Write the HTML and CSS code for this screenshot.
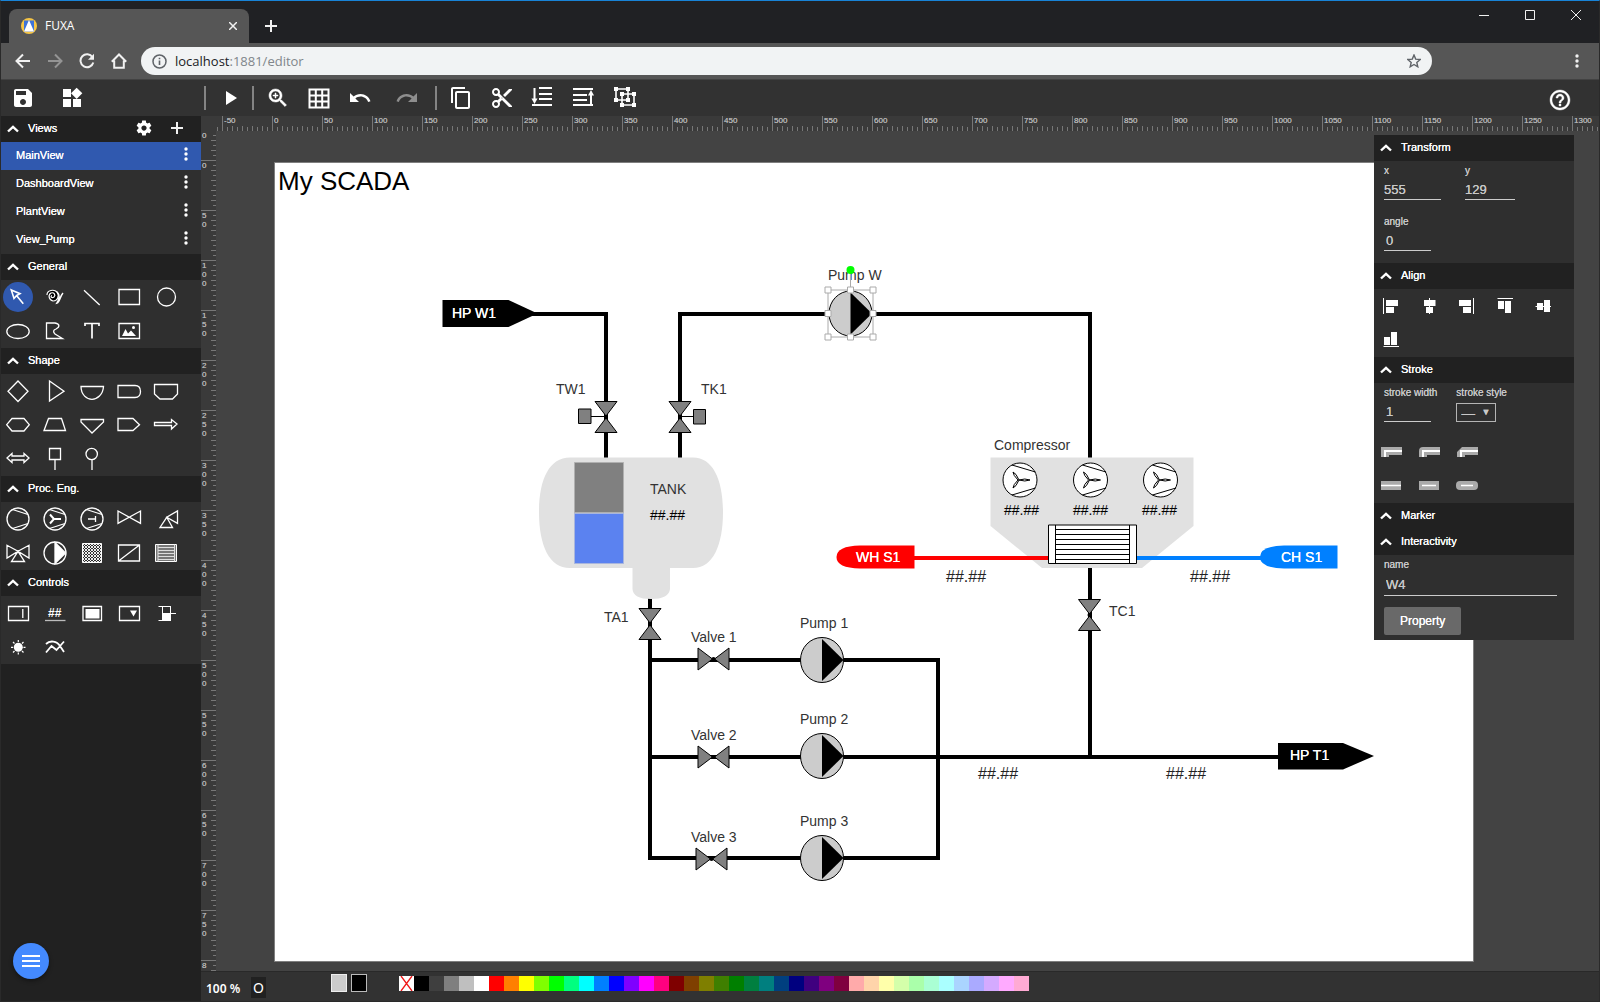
FILE: index.html
```html
<!DOCTYPE html>
<html lang="en">
<head>
<meta charset="utf-8">
<title>FUXA</title>
<link rel="stylesheet" href="styles.css">
</head>
<body>
<svg class="defs" aria-hidden="true">
  <symbol id="chevron" viewBox="0 0 12 8"><path d="M1 6.500L6 1.800L11 6.500" fill="none" stroke="#fff" stroke-width="2.400"/></symbol>
  <symbol id="dots" viewBox="0 0 4 14"><circle cx="2" cy="2" r="1.700"/><circle cx="2" cy="7" r="1.700"/><circle cx="2" cy="12" r="1.700"/></symbol>
</svg>
<div class="window">
  <header class="titlebar">
    <div class="tab">
      <svg width="16" height="16" viewBox="0 0 16 16"><circle cx="8" cy="8" r="8" fill="#f6c545"/><path d="M3 2.500H13V13.500H3Z" fill="#3f74d8"/><path d="M8 2L13 13.500H3Z" fill="#fff"/></svg>
      <span class="tab-title">FUXA</span>
      <button class="plain" aria-label="Close tab"><svg width="8" height="8" viewBox="0 0 8 8"><path d="M0 0L8 8M8 0L0 8" fill="none" stroke="#f1f1f1" stroke-width="1.500"/></svg></button>
    </div>
    <button class="plain new-tab" aria-label="New tab"><svg width="12" height="12" viewBox="0 0 12 12"><path d="M6 0V12M0 6H12" class="line-2"/></svg></button>
    <div class="window-buttons">
      <button class="plain" aria-label="Minimize"><svg width="10" height="10" viewBox="0 0 10 10"><path d="M0 5.500H10" class="line-1"/></svg></button>
      <button class="plain" aria-label="Maximize"><svg width="10" height="10" viewBox="0 0 10 10"><path d="M.5 .5H9.500V9.500H.5Z" class="line-1"/></svg></button>
      <button class="plain" aria-label="Close"><svg width="10" height="10" viewBox="0 0 10 10"><path d="M0 0L10 10M10 0L0 10" class="line-1"/></svg></button>
    </div>
  </header>

  <nav class="navbar">
    <div class="nav-buttons">
      <button class="plain" aria-label="Back"><svg width="16" height="16" viewBox="0 0 16 16"><path d="M15 8H2M8 1.500L1.500 8L8 14.500" class="line-2"/></svg></button>
      <button class="plain dim" aria-label="Forward"><svg width="16" height="16" viewBox="0 0 16 16"><path d="M1 8H14M8 1.500L14.500 8L8 14.500" class="line-2"/></svg></button>
      <button class="plain" aria-label="Reload"><svg width="16" height="16" viewBox="0 0 16 16"><path d="M13.500 4.200A6.500 6.500 0 1 0 14.300 9.500" class="line-2"/><path d="M15 .8V6.800H9Z" fill="#f1f1f1"/></svg></button>
      <button class="plain" aria-label="Home"><svg width="16" height="16" viewBox="0 0 16 16"><path d="M.8 8.700L8 1.500L15.200 8.700M3.200 7.500V14.800H12.800V7.500" class="line-2"/></svg></button>
    </div>
    <div class="omnibox">
      <svg width="15" height="15" viewBox="0 0 15 15"><circle cx="7.500" cy="7.500" r="6.500" fill="none" stroke="#5f6368" stroke-width="1.500"/><path d="M6.700 6.500H8.300V11H6.700ZM6.700 3.800H8.300V5.300H6.700Z" fill="#5f6368"/></svg>
      <span class="url">localhost<span class="url-path">:1881/editor</span></span>
      <button class="plain" aria-label="Bookmark"><svg width="14" height="14" viewBox="0 0 14 14"><path d="M7 1L8.700 5.100L13.200 5.500L9.800 8.400L10.800 12.800L7 10.500L3.200 12.800L4.200 8.400L.8 5.500L5.300 5.100Z" fill="none" stroke="#5f6368" stroke-width="1.400"/></svg></button>
    </div>
    <button class="plain browser-menu" aria-label="Menu"><svg width="4" height="14" fill="#f1f1f1"><use href="#dots"/></svg></button>
  </nav>

  <div class="toolbar">
    <div class="tool-group file-group">
      <button class="plain" aria-label="Save"><svg class="icon" viewBox="0 0 24 24"><path d="M17 3H5c-1.110 0-2 .9-2 2v14c0 1.100.89 2 2 2h14c1.100 0 2-.9 2-2V7l-4-4zm-5 16c-1.660 0-3-1.340-3-3s1.340-3 3-3 3 1.340 3 3-1.340 3-3 3zm3-10H5V5h10v4z"/></svg></button>
      <button class="plain" aria-label="Widgets"><svg class="icon" viewBox="0 0 24 24"><path d="M13 13v8h8v-8h-8zM3 21h8v-8H3v8zM3 3v8h8V3H3zm13.660-1.310L11 7.340 16.660 13l5.660-5.660-5.660-5.650z"/></svg></button>
    </div>
    <div class="tool-group">
      <button class="plain" aria-label="Run"><svg class="icon" viewBox="0 0 24 24"><path d="M8 5v14l11-7z"/></svg></button>
    </div>
    <div class="tool-group edit-group">
      <button class="plain" aria-label="Zoom"><svg class="icon" viewBox="0 0 24 24"><path d="M15.500 14h-.79l-.28-.27C15.410 12.590 16 11.110 16 9.500 16 5.910 13.090 3 9.500 3S3 5.910 3 9.500 5.910 16 9.500 16c1.610 0 3.090-.59 4.230-1.570l.27.28v.79l5 4.990L20.490 19l-4.990-5zm-6 0C7.010 14 5 11.990 5 9.500S7.010 5 9.500 5 14 7.010 14 9.500 11.990 14 9.500 14zM12 10h-2v2H9v-2H7V9h2V7h1v2h2v1z" stroke="#fff" stroke-width=".5"/></svg></button>
      <button class="plain" aria-label="Grid"><svg class="icon" viewBox="0 0 24 24"><path d="M2.500 3.500H21.500V21.500H2.500ZM8.800 3V22M15.200 3V22M2 9.500H22M2 15.500H22" fill="none" stroke="#fff" stroke-width="2"/></svg></button>
      <button class="plain" aria-label="Undo"><svg class="icon" viewBox="0 0 24 24"><path d="M12.500 8c-2.650 0-5.050.99-6.900 2.600L2 7v9h9l-3.620-3.620c1.390-1.160 3.160-1.880 5.120-1.880 3.540 0 6.550 2.310 7.600 5.500l2.370-.78C21.080 11.030 17.150 8 12.500 8z"/></svg></button>
      <button class="plain redo" aria-label="Redo" disabled><svg class="icon" viewBox="0 0 24 24"><path d="M18.400 10.600C16.550 8.990 14.150 8 11.500 8c-4.650 0-8.580 3.030-9.960 7.220L3.900 16c1.050-3.190 4.050-5.500 7.600-5.500 1.950 0 3.730.72 5.120 1.880L13 16h9V7l-3.600 3.600z"/></svg></button>
    </div>
    <div class="tool-group">
      <button class="plain" aria-label="Copy"><svg class="icon" viewBox="0 0 24 24"><path d="M16 1H4c-1.100 0-2 .9-2 2v14h2V3h12V1zm3 4H8c-1.100 0-2 .9-2 2v14c0 1.100.9 2 2 2h11c1.100 0 2-.9 2-2V7c0-1.100-.9-2-2-2zm0 16H8V7h11v14z"/></svg></button>
      <button class="plain" aria-label="Cut"><svg class="icon" viewBox="0 0 24 24"><path d="M9.640 7.640c.23-.5.36-1.050.36-1.640 0-2.210-1.790-4-4-4S2 3.790 2 6s1.790 4 4 4c.59 0 1.140-.13 1.640-.36L10 12l-2.360 2.360C7.140 14.130 6.590 14 6 14c-2.210 0-4 1.790-4 4s1.790 4 4 4 4-1.790 4-4c0-.59-.13-1.140-.36-1.640L12 14l7 7h3v-1L9.640 7.640zM6 8c-1.100 0-2-.89-2-2s.9-2 2-2 2 .89 2 2-.9 2-2 2zm0 12c-1.100 0-2-.89-2-2s.9-2 2-2 2 .89 2 2-.9 2-2 2zm6-7.500c-.28 0-.5-.22-.5-.5s.22-.5.5-.5.5.22.5.5-.22.5-.5.5zM19 3l-6 6 2 2 7-7V3z"/></svg></button>
      <button class="plain" aria-label="Send to back"><svg class="icon" viewBox="0 0 24 24"><path d="M8 2H21M8 8H21M8 13H21M1 19H21M3.500 2V15" fill="none" stroke="#fff" stroke-width="2"/><path d="M.5 12.500H6.500L3.500 18Z"/></svg></button>
      <button class="plain" aria-label="Bring to front"><svg class="icon" viewBox="0 0 24 24"><path d="M1 3H21M1 9H15M1 14H15M1 19H21M19 7V19" fill="none" stroke="#fff" stroke-width="2"/><path d="M16 9.500H22L19 4Z"/></svg></button>
      <button class="plain" aria-label="Group"><svg class="icon" viewBox="0 0 24 24"><path d="M3 3H15V14H3ZM9 8H21V19H9Z" fill="none" stroke="#fff" stroke-width="1.600"/><path d="M1 1h4v4H1zM13 1h4v4h-4zM1 12h4v4H1zM13 12h4v4h-4zM7 6h4v4H7zM19 6h4v4h-4zM7 17h4v4H7zM19 17h4v4h-4z"/></svg></button>
    </div>
    <button class="plain help" aria-label="Help"><svg class="icon" viewBox="0 0 24 24"><path d="M11 18h2v-2h-2v2zm1-16C6.480 2 2 6.480 2 12s4.480 10 10 10 10-4.480 10-10S17.520 2 12 2zm0 18c-4.410 0-8-3.590-8-8s3.590-8 8-8 8 3.590 8 8-3.590 8-8 8zm0-14c-2.210 0-4 1.790-4 4h2c0-1.100.9-2 2-2s2 .9 2 2c0 2-3 1.750-3 5h2c0-2.250 3-2.500 3-5 0-2.210-1.790-4-4-4z" stroke="#fff" stroke-width=".4"/></svg></button>
  </div>

  <div class="main">
    <aside class="sidebar">
      <div class="section-head">
        <button class="fold"><svg class="chevron"><use href="#chevron"/></svg>Views</button>
        <button class="plain" aria-label="View settings"><svg width="18" height="18" viewBox="0 0 24 24" fill="#fff"><path d="M19.430 12.980c.04-.32.07-.64.07-.98s-.03-.66-.07-.98l2.110-1.650c.19-.15.24-.42.12-.64l-2-3.460c-.12-.22-.39-.3-.61-.22l-2.490 1c-.52-.4-1.080-.73-1.690-.98l-.38-2.650C14.460 2.180 14.250 2 14 2h-4c-.25 0-.46.18-.49.42l-.38 2.650c-.61.25-1.170.59-1.690.98l-2.490-1c-.23-.09-.49 0-.61.22l-2 3.460c-.13.22-.07.49.12.64l2.110 1.650c-.04.32-.07.65-.07.98s.03.66.07.98l-2.110 1.650c-.19.15-.24.42-.12.64l2 3.460c.12.22.39.3.61.22l2.490-1c.52.4 1.080.73 1.690.98l.38 2.650c.03.24.24.42.49.42h4c.25 0 .46-.18.49-.42l.38-2.650c.61-.25 1.170-.59 1.690-.98l2.490 1c.23.09.49 0 .61-.22l2-3.460c.12-.22.07-.49-.12-.64l-2.110-1.650zM12 15.500c-1.930 0-3.500-1.570-3.500-3.500s1.570-3.500 3.500-3.500 3.500 1.570 3.500 3.500-1.570 3.500-3.500 3.500z"/></svg></button>
        <button class="plain add-view" aria-label="Add view"><svg width="12" height="12" viewBox="0 0 12 12"><path d="M6 0V12M0 6H12" class="line-2"/></svg></button>
      </div>
      <ul class="views">
        <li class="view active"><span>MainView</span><button class="plain" aria-label="MainView menu"><svg width="4" height="14" fill="#fff"><use href="#dots"/></svg></button></li>
        <li class="view"><span>DashboardView</span><button class="plain" aria-label="DashboardView menu"><svg width="4" height="14" fill="#fff"><use href="#dots"/></svg></button></li>
        <li class="view"><span>PlantView</span><button class="plain" aria-label="PlantView menu"><svg width="4" height="14" fill="#fff"><use href="#dots"/></svg></button></li>
        <li class="view"><span>View_Pump</span><button class="plain" aria-label="View_Pump menu"><svg width="4" height="14" fill="#fff"><use href="#dots"/></svg></button></li>
      </ul>

      <div class="section-head"><button class="fold"><svg class="chevron"><use href="#chevron"/></svg>General</button></div>
      <div class="tools">
        <button class="tool" aria-label="Select"><svg viewBox="-17 -17 37 34"><circle r="15" fill="#3059af" stroke="none"/><path d="M-6.700 -7L2 -3.300L-1.300 -1.500L-4 1.500ZM-1.500 -1.500L5.300 6.800" stroke-width="1.600"/></svg></button>
        <button class="tool" aria-label="Pencil"><svg viewBox="-17 -17 37 34"><path d="M-3 -1.500C-5 -.5 -3.500 1.500 -1 0C1 -2 -1 -5 -4 -4C-7 -2.500 -6.500 3 -2 4C3 4 4.500 -2 2 -5C-1 -8 -8 -7 -8 -2" fill="#000" stroke-width="1.200"/><path d="M2 -5C5 -2 5 1 2 6C5 5 5 -1 8 -4" stroke-width="1.500"/></svg></button>
        <button class="tool" aria-label="Line"><svg viewBox="-17 -17 37 34"><path d="M-8 -6.700L7.700 8"/></svg></button>
        <button class="tool" aria-label="Rectangle"><svg viewBox="-17 -17 37 34"><path d="M-10 -7.500H10.500V7.500H-10Z"/></svg></button>
        <button class="tool" aria-label="Circle"><svg viewBox="-17 -17 37 34"><circle cx=".5" r="9"/></svg></button>
        <button class="tool" aria-label="Ellipse"><svg viewBox="-17 -17 37 34"><ellipse cy=".5" rx="11.200" ry="7"/></svg></button>
        <button class="tool" aria-label="Path"><svg viewBox="-17 -17 37 34"><path d="M-8.500 -8H0C5 -7 5 -4 1 -2C-2 -1 -2 1 0 3L7.500 7.500H-8.500Z"/></svg></button>
        <button class="tool" aria-label="Text"><svg viewBox="-17 -17 37 34"><path d="M-7 -5V-7.500H7V-5M0 -7.500V7.500" stroke-width="1.700"/></svg></button>
        <button class="tool" aria-label="Image"><svg viewBox="-17 -17 37 34"><path d="M-10 -7.500H10.500V7.500H-10Z"/><path d="M-7 5L-3.500 -2L-1 2.500L2 -.5L7 5Z" fill="#fff" stroke="none"/><circle cx="4.500" cy="-3.500" r="1.500" fill="#fff" stroke="none"/></svg></button>
      </div>

      <div class="section-head"><button class="fold"><svg class="chevron"><use href="#chevron"/></svg>Shape</button></div>
      <div class="tools">
        <button class="tool" aria-label="Diamond"><svg viewBox="-17 -17 37 34"><path d="M0 -10L10 .3L0 10.500L-10 .3Z"/></svg></button>
        <button class="tool" aria-label="Triangle"><svg viewBox="-17 -17 37 34"><path d="M-5.500 -10L9 .3L-5.500 10Z"/></svg></button>
        <button class="tool" aria-label="Bowl"><svg viewBox="-17 -17 37 34"><path d="M-11 -4.500H11.500C11 4 5 8.300 0 8.300S-11 4 -11 -4.500Z"/></svg></button>
        <button class="tool" aria-label="Delay"><svg viewBox="-17 -17 37 34"><path d="M-11 -5.500H6C9.500 -5.500 11.500 -3 11.500 .5S9.500 6.500 6 6.500H-11Z"/></svg></button>
        <button class="tool" aria-label="Tray"><svg viewBox="-17 -17 37 34"><path d="M-11.500 -6.500H11.500V3L6.500 8H-6L-11.500 3Z"/></svg></button>
        <button class="tool" aria-label="Hexagon"><svg viewBox="-17 -17 37 34"><path d="M-11.300 -.3L-6 -6.500H6L11.300 -.3L6 6H-6Z"/></svg></button>
        <button class="tool" aria-label="Trapezoid"><svg viewBox="-17 -17 37 34"><path d="M-11 5.500L-6.500 -6.500H6.500L10.500 5.500Z"/></svg></button>
        <button class="tool" aria-label="Funnel"><svg viewBox="-17 -17 37 34"><path d="M-11 -5.500H11.500V-3L0 8L-11 -3Z"/></svg></button>
        <button class="tool" aria-label="Pentagon"><svg viewBox="-17 -17 37 34"><path d="M-11 -6.500H4L10.500 -.3L4 5.500H-11Z"/></svg></button>
        <button class="tool" aria-label="Arrow"><svg viewBox="-17 -17 37 34"><path d="M-11.500 -2.500H5.500V-5.500L11 -1L5.500 4V.5H-11.500Z"/></svg></button>
        <button class="tool" aria-label="Double arrow"><svg viewBox="-17 -17 37 34"><path d="M-11 -1L-6 -5.500V-3H6V-5.500L11 -1L6 3.500V1H-6V3.500Z"/></svg></button>
        <button class="tool" aria-label="Square tag"><svg viewBox="-17 -17 37 34"><path d="M-5.500 -10.500H5.500V.5H-5.500ZM0 .5V11"/></svg></button>
        <button class="tool" aria-label="Round tag"><svg viewBox="-17 -17 37 34"><circle cx="-.3" cy="-5" r="5.700"/><path d="M0 .5V11"/></svg></button>
      </div>

      <div class="section-head"><button class="fold"><svg class="chevron"><use href="#chevron"/></svg>Proc. Eng.</button></div>
      <div class="tools">
        <button class="tool" aria-label="Compressor"><svg viewBox="-17 -17 37 34"><circle r="11"/><path d="M-5.500 -9.500L10 -4.500M-5.500 9.500L10 4.500"/></svg></button>
        <button class="tool" aria-label="Fan"><svg viewBox="-17 -17 37 34"><circle r="11"/><path d="M-5.500 -9.500L10 -4.500M-5.500 9.500L10 4.500"/><path d="M-5 -4.500L-1 0L-5 4.500M-1 0H6" stroke-width="2"/></svg></button>
        <button class="tool" aria-label="Piston"><svg viewBox="-17 -17 37 34"><circle r="11"/><path d="M-5.500 -9.500L10 -4.500M-5.500 9.500L10 4.500M3.500 -3V3M-4 0H3.500"/></svg></button>
        <button class="tool" aria-label="Valve"><svg viewBox="-17 -17 37 34"><path d="M-11 -8L11.500 4.300V-8L-11 4.300Z"/></svg></button>
        <button class="tool" aria-label="Angle valve"><svg viewBox="-17 -17 37 34"><path d="M11.500 -8V4.300L.7 -1.700ZM.7 -1.700L-6 8.500H6.500Z"/></svg></button>
        <button class="tool" aria-label="Three way valve"><svg viewBox="-17 -17 37 34"><path d="M-11 -7.700V5L0 -1.700ZM11 -7.700V5L0 -1.700ZM0 -1.700L-6.500 8.500H6.500Z"/></svg></button>
        <button class="tool" aria-label="Pump"><svg viewBox="-17 -17 37 34"><circle r="11"/><path d="M0 -10.500V10.500L10.500 0Z" fill="#fff"/></svg></button>
        <button class="tool" aria-label="Filter"><svg viewBox="-17 -17 37 34"><pattern id="hatch" width="3" height="3" patternUnits="userSpaceOnUse"><path d="M0 0L3 3M3 0L0 3" stroke="#fff" stroke-width=".9"/></pattern><path d="M-9.500 -9.500H9.500V9.500H-9.500Z" fill="url(#hatch)" stroke-width="1"/></svg></button>
        <button class="tool" aria-label="Heat exchanger"><svg viewBox="-17 -17 37 34"><path d="M-10.500 -8H10.500V8H-10.500ZM-10.500 8L10.500 -8"/></svg></button>
        <button class="tool" aria-label="Tube bundle"><svg viewBox="-17 -17 37 34"><path d="M-10.500 -8.500H10.500V8.500H-10.500Z" fill="#777" stroke-width="1"/><path d="M-8 -8.500V8.500M8.500 -8.500V8.500M-8 -5.500H8M-8 -2.500H8M-8 .5H8M-8 3.500H8M-8 6.500H8" stroke-width="1" stroke="#ddd"/></svg></button>
      </div>

      <div class="section-head"><button class="fold"><svg class="chevron"><use href="#chevron"/></svg>Controls</button></div>
      <div class="tools">
        <button class="tool" aria-label="Input"><svg viewBox="-17 -17 37 34"><path d="M-9.500 -6.500H10.500V7.500H-9.500ZM4.800 -4V5"/></svg></button>
        <button class="tool" aria-label="Output"><svg viewBox="-17 -17 37 34"><text x="-7" y="4">##</text><path d="M-10 7.500H10.500" stroke="#bbb"/></svg></button>
        <button class="tool" aria-label="Button"><svg viewBox="-17 -17 37 34"><path d="M-9 -6.500H9.500V7.500H-9Z"/><path d="M-6.500 -4H7.500V5.500H-6.500Z" fill="#fff" stroke="none"/></svg></button>
        <button class="tool" aria-label="Drop-down"><svg viewBox="-17 -17 37 34"><path d="M-9.500 -6.500H10.500V7.500H-9.500Z"/><path d="M1 -2.500H8L4.500 3.500Z" fill="#fff" stroke="none"/></svg></button>
        <button class="tool" aria-label="Slider"><svg viewBox="-17 -17 37 34"><path d="M-7.500 -6.500H5M-7.500 7.500H-3M-3.500 -6.500V7.500M4.500 -6.500V0M4.500 .5H10" stroke-width="1"/><path d="M-4 0H5V8H-4Z" fill="#fff" stroke="none"/></svg></button>
        <button class="tool" aria-label="Lamp"><svg viewBox="-17 -17 37 34"><circle cx=".3" cy=".3" r="4.500" fill="#fff" stroke="none"/><path d="M.3 -7V-5M.3 5.500V7.500M-7 .3H-5M5.500 .3H7.500M-5 -5L-3.500 -3.500M4 4L5.500 5.500M-5 5.500L-3.500 4M4 -3.500L5.500 -5" stroke-width="1.200"/></svg></button>
        <button class="tool" aria-label="Chart"><svg viewBox="-17 -17 37 34"><path d="M-9 5.500L-3.500 -1L1.500 3L9 -5.500M-9 -3C-5 -7 2 -6 5 -1L9 5" stroke-width="1.800"/></svg></button>
      </div>
      <button class="fab" aria-label="Menu"><svg width="18" height="14" viewBox="0 0 18 14"><path d="M0 2H18M0 7H18M0 12H18" stroke="#fff" stroke-width="2"/></svg></button>
    </aside>

    <div class="editor">
      <div class="ruler-top">
        <span>-50</span><span>0</span><span>50</span><span>100</span><span>150</span><span>200</span><span>250</span><span>300</span><span>350</span><span>400</span><span>450</span><span>500</span><span>550</span><span>600</span><span>650</span><span>700</span><span>750</span><span>800</span><span>850</span><span>900</span><span>950</span><span>1000</span><span>1050</span><span>1100</span><span>1150</span><span>1200</span><span>1250</span><span>1300</span>
      </div>
      <div class="stage">
        <div class="ruler-left">
          <div class="marks"><span class="partial">0</span><span>0</span><span>50</span><span>100</span><span>150</span><span>200</span><span>250</span><span>300</span><span>350</span><span>400</span><span>450</span><span>500</span><span>550</span><span>600</span><span>650</span><span>700</span><span>750</span><span class="last">8</span></div>
        </div>
        <div class="workspace">
          <svg class="drawing" width="1200" height="800" viewBox="274 162 1200 800">
            <defs>
              <g id="valve"><path d="M-11 -15.500H11L0 -1ZM-11 15.500H11L0 1Z" fill="#808080" stroke="#000"/><circle r="2"/></g>
              <g id="pump"><ellipse rx="21.500" ry="22.500" fill="#ccc" stroke="#000"/><path d="M0 -21V21L21.500 0Z"/></g>
              <g id="fan" fill="none" stroke="#000"><circle r="17" fill="#fff"/><path d="M-8 -15L15.500 -8M-8 15L15.500 8"/><path d="M-7 -8Q-4 -7 -1 0Q-4 7 -7 8Q-7 5 -2 0Q-7 -5 -7 -8ZM-1 0Q5 -2 10 0Q5 2 -1 0Z"/></g>
              <g id="handle"><path d="M-3 -3H3V3H-3Z" fill="#fff" stroke="#aaa"/></g>
            </defs>
            <path d="M274.500 162.500H1473.500V961.500H274.500Z" fill="#fff" stroke="#7f7f7f"/>
            <text class="heading" x="278" y="190">My SCADA</text>

            <g fill="none" stroke="#000" stroke-width="4">
              <path d="M530 314H606V458M680 458V314H1090V458M1090 566V757M650 598V858H938V660H650M650 757H1280"/>
              <path d="M912 558H1049" stroke="#f00"/>
              <path d="M1135 558H1264" stroke="#0080ff"/>
            </g>

            <path d="M442.500 300H508.500L537.500 313.500L508.500 327H442.500Z"/>
            <path d="M1278 743H1343L1374 756L1343 769.500H1278Z"/>

            <path d="M570 457.500H693C713 457.500 723 480 723 512C723 545 713 568 693 568H670V589Q669 599 651 599Q633 599 632.500 589V568H570C549 568 539 545 539 512C539 480 549 457.500 570 457.500Z" fill="#e1e1e1"/>
            <path d="M574.500 462.500H623.500V512.500H574.500Z" fill="#808080" stroke="#b0b0b0"/>
            <path d="M574.500 513.500H623.500V563.500H574.500Z" fill="#5b82f0" stroke="#a9b6dd"/>

            <g fill="#808080" stroke="#000"><path d="M578.500 409H591V423.500H578.500ZM591 416.500H606M693.500 409.500H705.500V424H693.500ZM693 416.500H680"/></g>
            <use href="#valve" x="606" y="417"/>
            <use href="#valve" x="680" y="417"/>
            <use href="#valve" x="650" y="624"/>
            <use href="#valve" x="1089.500" y="615"/>
            <use href="#valve" transform="translate(713.500 659) rotate(90)"/>
            <use href="#valve" transform="translate(713.500 757) rotate(90)"/>
            <use href="#valve" transform="translate(711.500 859) rotate(90)"/>
            <use href="#pump" x="822" y="660"/>
            <use href="#pump" x="822" y="756"/>
            <use href="#pump" x="822" y="858"/>
            <use href="#pump" x="850.500" y="313.500"/>

            <path d="M990.500 457.500H1193.500V526L1142 568H1042L990.500 526Z" fill="#e1e1e1"/>
            <path d="M1020 558H1048" stroke="#f00" stroke-width="4"/>
            <path d="M1136 558H1160" stroke="#0080ff" stroke-width="4"/>
            <use href="#fan" x="1020" y="480"/>
            <use href="#fan" x="1090.500" y="480"/>
            <use href="#fan" x="1160.500" y="480"/>
            <path d="M1048.500 525H1136.500V563.500H1048.500ZM1055.500 525V563.500M1129.500 525V563.500M1055 529.500H1129M1055 534.500H1129M1055 539.500H1129M1055 544.500H1129M1055 549.500H1129M1055 554.500H1129M1055 559.500H1129" fill="#fff" stroke="#000"/>
            <path d="M914.500 545.500V568.500H860Q836.500 568 836.500 557Q836.500 546 860 545.500Z" fill="#f00"/>
            <path d="M1337.500 545.500V568.500H1284Q1260 568 1260 557Q1260 546 1284 545.500Z" fill="#0080ff"/>

            <g class="label">
              <text x="556" y="394">TW1</text>
              <text x="701" y="394">TK1</text>
              <text x="828" y="280">Pump W</text>
              <text x="650" y="494">TANK</text>
              <text x="994" y="450">Compressor</text>
              <text x="604" y="622">TA1</text>
              <text x="1109" y="616">TC1</text>
              <text x="691" y="642">Valve 1</text>
              <text x="691" y="740">Valve 2</text>
              <text x="691" y="842">Valve 3</text>
              <text x="800" y="628">Pump 1</text>
              <text x="800" y="724">Pump 2</text>
              <text x="800" y="826">Pump 3</text>
            </g>
            <g class="label value">
              <text x="650" y="520">##.##</text>
              <text x="1004" y="515">##.##</text>
              <text x="1073" y="515">##.##</text>
              <text x="1142" y="515">##.##</text>
            </g>
            <g class="reading">
              <text x="946" y="582">##.##</text>
              <text x="1190" y="582">##.##</text>
              <text x="978" y="779">##.##</text>
              <text x="1166" y="779">##.##</text>
            </g>
            <g class="label tag">
              <text x="452" y="318">HP W1</text>
              <text x="1290" y="760">HP T1</text>
              <text x="856" y="562">WH S1</text>
              <text x="1281" y="562">CH S1</text>
            </g>

            <path d="M828 290H873V337H828ZM850.500 290V270" fill="none" stroke="#aaa"/>
            <use href="#handle" x="828" y="290"/><use href="#handle" x="850.500" y="290"/><use href="#handle" x="873" y="290"/>
            <use href="#handle" x="828" y="313.500"/><use href="#handle" x="873" y="313.500"/>
            <use href="#handle" x="828" y="337"/><use href="#handle" x="850.500" y="337"/><use href="#handle" x="873" y="337"/>
            <circle cx="850.500" cy="270" r="4" fill="#0f0"/>
          </svg>

          <section class="panel">
            <div class="section-head"><button class="fold"><svg class="chevron"><use href="#chevron"/></svg>Transform</button></div>
            <div class="panel-body transform-body">
              <div class="fields">
                <label class="field">x<input class="w-x" value="555"></label>
                <label class="field">y<input class="w-y" value="129"></label>
              </div>
              <label class="field">angle<input class="w-s" value="0"></label>
            </div>
            <div class="section-head"><button class="fold"><svg class="chevron"><use href="#chevron"/></svg>Align</button></div>
            <div class="icon-grid">
              <button class="cell" aria-label="Align left"><svg viewBox="-17 -17 38 34"><path d="M-7.500 -8V8" stroke="#fff"/><path d="M-5 -6H7V0H-5ZM-5 1H3V7H-5Z"/></svg></button>
              <button class="cell" aria-label="Align center"><svg viewBox="-17 -17 38 34"><path d="M.5 -8V8" stroke="#fff"/><path d="M-5 -6H6.500V0H-5ZM-3 1H4V7H-3Z"/></svg></button>
              <button class="cell" aria-label="Align right"><svg viewBox="-17 -17 38 34"><path d="M6.500 -8V8" stroke="#fff"/><path d="M-8 -6H4V0H-8ZM-4 1H4V7H-4Z"/></svg></button>
              <button class="cell" aria-label="Align top"><svg viewBox="-17 -17 38 34"><path d="M-7.500 -7.500H8" stroke="#fff"/><path d="M-7 -5H-1V3H-7ZM0 -5H6V7H0Z"/></svg></button>
              <button class="cell" aria-label="Align middle"><svg viewBox="-17 -17 38 34"><path d="M-7.500 .5H8" stroke="#fff"/><path d="M-6 -3H0V4H-6ZM1 -6H7V6H1Z"/></svg></button>
              <button class="cell" aria-label="Align bottom"><svg viewBox="-17 -17 38 34"><path d="M-7.500 6.500H8" stroke="#fff"/><path d="M-7 -3H-1V5H-7ZM0 -8H6V5H0Z"/></svg></button>
            </div>
            <div class="section-head"><button class="fold"><svg class="chevron"><use href="#chevron"/></svg>Stroke</button></div>
            <div class="panel-body stroke-body">
              <label class="field">stroke width<input class="w-s" value="1"></label>
              <label class="field">stroke style<span class="picker"><select><option>—</option><option>...</option><option>- -</option></select></span></label>
            </div>
            <div class="icon-grid stroke-icons">
              <button class="cell" aria-label="Miter join"><svg viewBox="-17 -17 38 34"><path d="M-10 5V-5H11V3H-2V5Z" fill="#aaa"/><path d="M-6 5V-1H11" fill="none" stroke="#fff" stroke-width="2"/></svg></button>
              <button class="cell" aria-label="Round join"><svg viewBox="-17 -17 38 34"><path d="M-10 5V-1Q-10 -5 -6 -5H11V3H-2V5Z" fill="#aaa"/><path d="M-6 5V-1H11" fill="none" stroke="#fff" stroke-width="2"/></svg></button>
              <button class="cell" aria-label="Bevel join"><svg viewBox="-17 -17 38 34"><path d="M-10 5V0L-5 -5H11V3H-2V5Z" fill="#aaa"/><path d="M-6 5V-1H11" fill="none" stroke="#fff" stroke-width="2"/></svg></button>
            </div>
            <div class="icon-grid stroke-icons">
              <button class="cell" aria-label="Butt cap"><svg viewBox="-17 -17 38 34"><path d="M-10 -5H10V4H-10Z" fill="#aaa"/><path d="M-10 -.5H10" stroke="#fff" stroke-width="1.500"/></svg></button>
              <button class="cell" aria-label="Square cap"><svg viewBox="-17 -17 38 34"><path d="M-10 -5H10V4H-10Z" fill="#aaa"/><path d="M-7 -.5H7" stroke="#fff" stroke-width="1.500"/></svg></button>
              <button class="cell" aria-label="Round cap"><svg viewBox="-17 -17 38 34"><rect x="-11" y="-5" width="22" height="9" rx="4" fill="#aaa"/><path d="M-6 -.5H6" stroke="#fff" stroke-width="1.500"/></svg></button>
            </div>
            <div class="section-head"><button class="fold"><svg class="chevron"><use href="#chevron"/></svg>Marker</button></div>
            <div class="section-head"><button class="fold"><svg class="chevron"><use href="#chevron"/></svg>Interactivity</button></div>
            <div class="panel-body interact-body">
              <label class="field wide">name<input class="w-full" value="W4"></label>
              <button class="property">Property</button>
            </div>
          </section>
        </div>
      </div>

      <footer class="bottombar">
        <span class="zoom">100 %</span>
        <button class="opacity">O</button>
        <button class="paint fill" aria-label="Fill colour"></button>
        <button class="paint stroke" aria-label="Stroke colour"></button>
        <div class="palette">
          <button aria-label="No colour" style="background:#fff"><svg width="15" height="15" viewBox="0 0 15 15"><path d="M2 0L13 15M13 0L2 15" stroke="#f01818" stroke-width="1.300"/></svg></button>
          <button style="background:#000"></button><button style="background:#3f3f3f"></button><button style="background:#7f7f7f"></button><button style="background:#bfbfbf"></button><button style="background:#fff"></button>
          <button style="background:#f00"></button><button style="background:#ff7f00"></button><button style="background:#ff0"></button><button style="background:#7fff00"></button><button style="background:#0f0"></button><button style="background:#00ff7f"></button><button style="background:#0ff"></button><button style="background:#007fff"></button><button style="background:#00f"></button><button style="background:#7f00ff"></button><button style="background:#f0f"></button><button style="background:#ff007f"></button>
          <button style="background:#7f0000"></button><button style="background:#7f3f00"></button><button style="background:#7f7f00"></button><button style="background:#3f7f00"></button><button style="background:#007f00"></button><button style="background:#007f3f"></button><button style="background:#007f7f"></button><button style="background:#003f7f"></button><button style="background:#00007f"></button><button style="background:#3f007f"></button><button style="background:#7f007f"></button><button style="background:#7f003f"></button>
          <button style="background:#faa"></button><button style="background:#ffd4aa"></button><button style="background:#ffa"></button><button style="background:#d4ffaa"></button><button style="background:#afa"></button><button style="background:#aaffd4"></button><button style="background:#aff"></button><button style="background:#aad4ff"></button><button style="background:#aaf"></button><button style="background:#d4aaff"></button><button style="background:#faf"></button><button style="background:#ffaad4"></button>
        </div>
      </footer>
    </div>
  </div>
</div>
</body>
</html>
```
FILE: styles.css
```css
* { box-sizing: border-box; }

body {
  margin: 0;
  font-family: "Liberation Sans", Arial, sans-serif;
  font-size: 11px;
  color: #fff;
  background: #212121;
}

button, input, select { font: inherit; color: inherit; }
svg { display: block; }

.defs { position: absolute; width: 0; height: 0; }

.plain, .fold, .tool, .cell, .palette button {
  margin: 0;
  padding: 0;
  border: 0;
  background: none;
}

.line-1, .line-2 { fill: none; stroke: #f1f1f1; stroke-width: 1; }
.line-2 { stroke-width: 2; }

.window {
  display: flex;
  flex-direction: column;
  height: 100vh;
  min-height: 720px;
  overflow: hidden;
  border: 1px solid #2a2a2a;
  border-top-color: #1883d7;
}

/* browser chrome */
.titlebar {
  display: flex;
  flex: none;
  height: 42px;
  padding-left: 8px;
  background: #202124;
}

.tab {
  display: flex;
  align-items: center;
  align-self: flex-end;
  gap: 8px;
  width: 240px;
  height: 34px;
  padding: 0 12px;
  border-radius: 8px 8px 0 0;
  background: #565656;
}

.tab-title {
  flex: 1;
  padding-bottom: 1px;
  font: 12px "Open Sans", "Noto Sans", sans-serif;
}

.new-tab { margin: 8px 0 0 16px; }

.window-buttons {
  display: flex;
  align-items: flex-start;
  gap: 36px;
  margin-left: auto;
  padding: 9px 18px 0 0;
}

.navbar {
  display: flex;
  flex: none;
  align-items: center;
  height: 37px;
  border-bottom: 1px solid #424242;
  background: #565656;
}

.nav-buttons { display: flex; gap: 16px; padding: 0 14px; }
.dim { opacity: .4; }

.omnibox {
  display: flex;
  flex: 1;
  align-items: center;
  gap: 8px;
  height: 28px;
  padding: 0 11px;
  border-radius: 14px;
  background: #f1f3f4;
}

.url {
  flex: 1;
  color: #202124;
  font: 13px "Open Sans", "Noto Sans", sans-serif;
}

.url-path { color: #80868b; }
.browser-menu { width: 4px; margin: 0 20px 0 143px; }

/* application toolbar */
.toolbar {
  display: flex;
  flex: none;
  align-items: center;
  height: 36px;
  background: #323232;
}

.icon { width: 24px; height: 24px; fill: #fff; }

.tool-group {
  display: flex;
  gap: 17px;
  padding: 0 10px 0 12px;
  border-left: 2px solid #848484;
}

.file-group {
  gap: 25px;
  width: 203px;
  padding: 0 10px;
  border-left: 0;
}

.edit-group { padding-right: 16px; }
.redo { margin-left: 6px; opacity: .45; }
.help { margin: 4px 27px 0 auto; }

/* columns */
.main { display: flex; flex: 1; min-height: 0; }

.sidebar {
  position: relative;
  flex: none;
  width: 200px;
  background: #212121;
}

.section-head {
  display: flex;
  align-items: center;
  height: 26px;
  padding: 0 18px 2px 6px;
  background: #212121;
}

.fold {
  display: flex;
  flex: 1;
  align-items: center;
  gap: 9px;
  text-shadow: 0 0 0 #fff;
}

.chevron { width: 12px; height: 8px; margin-top: 2px; }
.add-view { margin-left: 18px; }

.views { margin: 0; padding: 0; list-style: none; background: #2f2f2f; }

.view {
  display: flex;
  align-items: center;
  justify-content: space-between;
  height: 28px;
  padding: 0 13px 2px 15px;
  text-shadow: 0 0 0 #fff;
}

.view.active { background: #3059af; }
.view button { padding-bottom: 2px; }

.tools {
  display: grid;
  grid-template-columns: repeat(5, 37px);
  background: #2f2f2f;
}

.tool svg {
  width: 37px;
  height: 34px;
  fill: none;
  stroke: #fff;
  stroke-width: 1.3;
}

.tool text { fill: #fff; stroke: none; font-size: 12px; font-weight: bold; }

.fab {
  position: absolute;
  bottom: 22px;
  left: 12px;
  display: grid;
  place-items: center;
  width: 36px;
  height: 36px;
  padding: 0;
  border: 0;
  border-radius: 50%;
  background: #448aff;
  box-shadow: 0 2px 4px rgba(0, 0, 0, .4);
}

.editor { display: flex; flex: 1; flex-direction: column; min-width: 0; background: #3a3a3a; }

/* rulers */
.ruler-top, .ruler-left {
  color: #b4b4b4;
  font-size: 8px;
  line-height: 9px;
  text-shadow: 0 0 0 #b4b4b4;
  background-color: #3a3a3a;
}

.ruler-top {
  display: flex;
  flex: none;
  height: 15px;
  margin-left: 15px;
  padding-left: 6px;
  overflow: hidden;
  background-image: linear-gradient(90deg, #777 1px, transparent 1px), linear-gradient(90deg, #777 1px, transparent 1px);
  background-repeat: repeat-x;
  background-position: 6px 10px, 1px 11px;
  background-size: 10px 5px, 10px 4px;
}

.ruler-top span {
  flex: none;
  width: 50px;
  padding-left: 1px;
  border-left: 1px solid #777;
}

.stage { display: flex; flex: 1; min-height: 0; }

.ruler-left {
  flex: none;
  width: 15px;
  overflow: hidden;
  background-image: linear-gradient(#777 1px, transparent 1px), linear-gradient(#777 1px, transparent 1px);
  background-repeat: repeat-y;
  background-position: 10px 9px, 12px 4px;
  background-size: 5px 10px, 3px 10px;
}

.marks span {
  display: block;
  height: 50px;
  padding: 0 9px 0 1px;
  border-top: 1px solid #777;
  word-break: break-all;
}

.marks .partial { height: 29px; border-top: 0; }
.marks .last { height: 10px; }

.workspace {
  position: relative;
  flex: 1;
  min-width: 0;
  overflow: hidden;
  background: #434343;
}

.drawing { margin: 31px 58px; }
.heading { font-size: 26px; }
.label { font-size: 14px; fill: #333; }
.value { fill: #000; }
.reading { font-size: 16px; fill: #222; }
.tag { fill: #fff; text-shadow: 0 0 0 #fff; }

/* property panel */
.panel {
  position: absolute;
  top: 4px;
  right: 25px;
  width: 200px;
  background: #2f2f2f;
}

.panel-body { padding: 4px 10px; }
.transform-body { height: 102px; }
.fields { display: flex; gap: 24px; margin-bottom: 16px; }

.field {
  display: flex;
  flex-direction: column;
  align-items: flex-start;
  color: #c8c8c8;
  font-size: 10px;
  line-height: 12px;
  text-shadow: 0 0 0 #c8c8c8;
}

.field input {
  height: 23px;
  padding: 3px 0 0;
  border: 0;
  border-bottom: 1px solid #ccc;
  background: none;
  font-size: 13px;
  text-shadow: inherit;
}

.field .w-x { width: 57px; }
.field .w-y { width: 50px; }
.field .w-s { width: 47px; padding-left: 2px; }
.field .w-full { width: 173px; height: 25px; padding-left: 2px; }

.icon-grid { display: grid; grid-template-columns: repeat(5, 38px); }
.cell svg { width: 38px; height: 34px; fill: #fff; }

.stroke-body { display: flex; gap: 19px; height: 52px; }

.picker {
  display: flex;
  position: relative;
  width: 40px;
  height: 19px;
  margin-top: 4px;
  border: 1px solid #b4b4b4;
}

.picker::after {
  content: "▼";
  position: absolute;
  right: 5px;
  top: 2px;
  font-size: 9px;
}

.picker select {
  flex: 1;
  padding: 0 0 0 4px;
  border: 0;
  appearance: none;
  background: none;
  font-size: 14px;
}

.interact-body { height: 85px; }

.property {
  display: block;
  height: 28px;
  margin-top: 11px;
  padding: 0 16px;
  border: 0;
  border-radius: 2px;
  background: #696969;
  font-size: 12px;
  text-shadow: 0 0 0 #fff;
}

/* bottom bar */
.bottombar {
  display: flex;
  flex: none;
  align-items: flex-start;
  height: 30px;
  padding: 2px 0 0 5px;
  border-top: 1px solid #292929;
  background: #323232;
}

.zoom {
  width: 45px;
  padding-top: 7px;
  font: 600 12px/16px "Noto Sans", "Open Sans", sans-serif;
}

.opacity {
  width: 15px;
  height: 21px;
  margin: 3px 65px 0 0;
  padding: 0;
  border: 0;
  background: #212121;
  font: 14px/16px "Noto Sans", "Open Sans", sans-serif;
}

.paint { width: 16px; height: 18px; margin-right: 4px; padding: 0; border: 1px solid #eee; }
.fill { background: #ccc; }
.stroke { background: #000; border-color: #bbb; }

.palette { display: flex; margin: 2px 0 0 28px; }
.palette button { width: 15px; height: 15px; }
```
